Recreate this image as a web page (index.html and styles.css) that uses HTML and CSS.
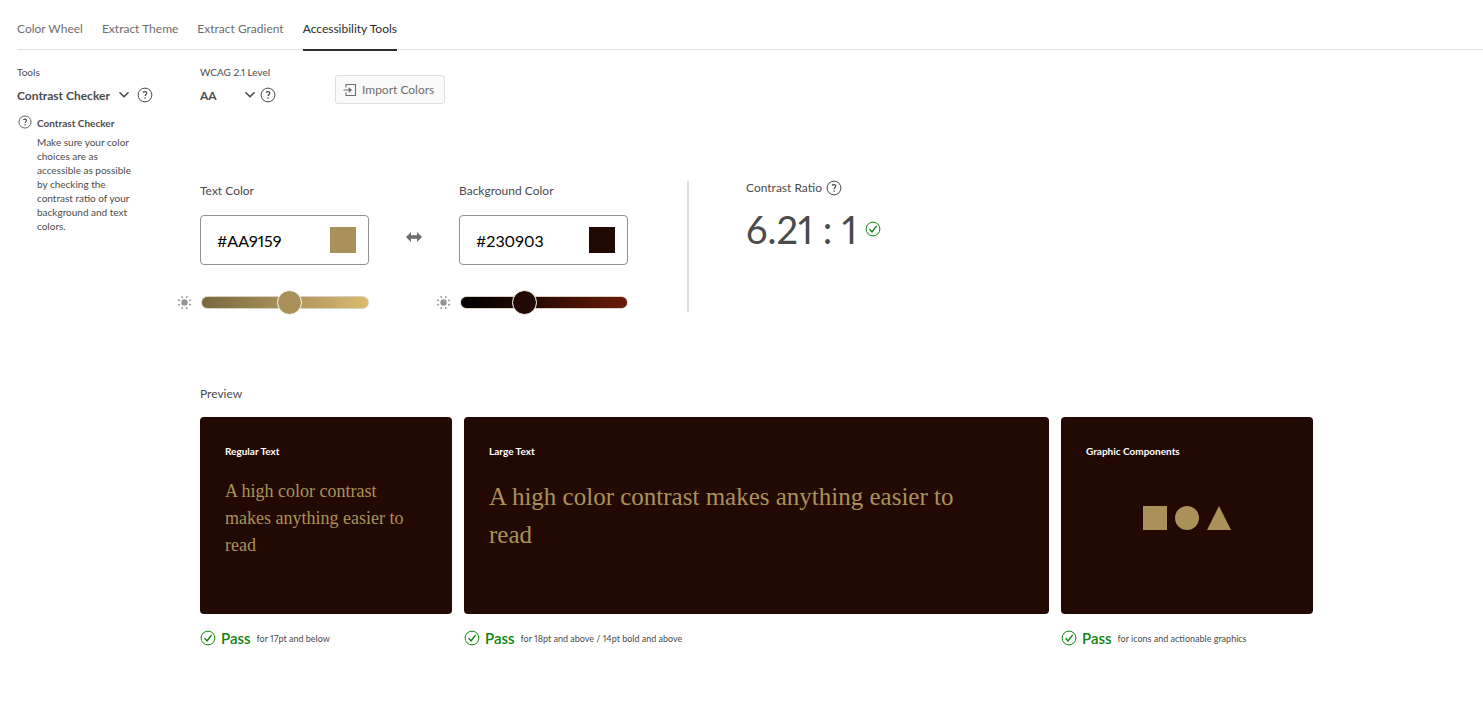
FILE: index.html
```html
<!DOCTYPE html>
<html lang="en">
<head>
<meta charset="utf-8">
<meta name="viewport" content="width=device-width, initial-scale=1">
<title>Accessibility Tools</title>
<link rel="stylesheet" href="styles.css">
</head>
<body>
<svg class="sprite" aria-hidden="true">
  <symbol id="help" viewBox="0 0 16 16">
    <circle cx="8" cy="8" r="6.9" fill="none" stroke="currentColor" stroke-width="1"/>
    <path d="M6 5.500C6.500 5 7 4.700 8 4.700c1.100 0 1.800.5 1.800 1.400 0 1.300-1.700 1.500-1.700 3" fill="none" stroke="currentColor" stroke-width="1.200"/>
    <circle cx="8.100" cy="11.100" r=".8" fill="currentColor"/>
  </symbol>
  <symbol id="pass" viewBox="0 0 16 16">
    <circle cx="8" cy="8" r="6.900" fill="none" stroke="currentColor" stroke-width="1"/>
    <path d="M4.600 8.300l2.400 2.600 4.700-6" fill="none" stroke="currentColor" stroke-width="1.500"/>
  </symbol>
  <symbol id="chevron" viewBox="0 0 10 6">
    <path d="M1 .8l4 4 4-4" fill="none" stroke="currentColor" stroke-width="1.600" stroke-linecap="round" stroke-linejoin="round"/>
  </symbol>
  <symbol id="sun" viewBox="0 0 16 16">
    <circle cx="8" cy="8" r="3.400" fill="currentColor"/>
    <g transform="rotate(22.500 8 8)"><path d="M8 .4v2.400M8 13.200v2.400M.4 8h2.400M13.200 8h2.400M2.600 2.600l1.700 1.700M11.700 11.700l1.700 1.700M2.600 13.400l1.700-1.700M11.700 4.300l1.700-1.700" stroke="currentColor" stroke-width="1.400"/></g>
  </symbol>
</svg>

<nav class="tabs">
  <a class="tab" href="#wheel">Color Wheel</a>
  <a class="tab" href="#theme">Extract Theme</a>
  <a class="tab" href="#gradient">Extract Gradient</a>
  <a class="tab tab-active" href="#tools" aria-current="page">Accessibility Tools</a>
</nav>

<div class="layout">
  <aside class="sidebar">
    <label class="small-label" for="tool">Tools</label>
    <div class="picker">
      <span class="select-wrap select-tool">
        <select id="tool"><option>Contrast Checker</option><option>Color Blind Safe</option></select>
        <svg class="chevron"><use href="#chevron"/></svg>
      </span>
      <button class="icon-button" aria-label="About tools"><svg class="icon"><use href="#help"/></svg></button>
    </div>
    <div class="hint">
      <svg class="hint-icon"><use href="#help"/></svg>
      <div>
        <h2 class="hint-title">Contrast Checker</h2>
        <p class="hint-text">Make sure your color choices are as accessible as possible by checking the contrast ratio of your background and text colors.</p>
      </div>
    </div>
  </aside>

  <main class="content">
    <div class="toolbar">
      <div class="level">
        <label class="small-label" for="level">WCAG 2.1 Level</label>
        <div class="picker">
          <span class="select-wrap select-level">
            <select id="level"><option>AA</option><option>AAA</option></select>
            <svg class="chevron"><use href="#chevron"/></svg>
          </span>
          <button class="icon-button" aria-label="About WCAG levels"><svg class="icon"><use href="#help"/></svg></button>
        </div>
      </div>
      <button class="import">
        <svg class="import-icon" viewBox="0 0 14 14"><path d="M3 4.500v-3h9.500v11H3v-3M.5 7h6" fill="none" stroke="currentColor" stroke-width="1.100"/><path d="M5.700 4.300L9 7 5.700 9.700z" fill="currentColor"/></svg>
        Import Colors
      </button>
    </div>

    <section class="colors">
      <div class="color">
        <label class="label" for="text-hex">Text Color</label>
        <div class="field">
          <input class="hex" id="text-hex" type="text" value="#AA9159">
          <button class="swatch swatch-text" aria-label="Pick text color"></button>
        </div>
        <div class="slider">
          <svg class="sun"><use href="#sun"/></svg>
          <input class="range range-text" type="range" min="0" max="100" value="53" aria-label="Text brightness">
        </div>
      </div>
      <button class="swap" aria-label="Swap colors">
        <svg viewBox="0 0 16 10"><path d="M0 5l5-5v3.200h6V0l5 5-5 5V6.800H5V10z" fill="currentColor"/></svg>
      </button>
      <div class="color">
        <label class="label" for="back-hex">Background Color</label>
        <div class="field">
          <input class="hex" id="back-hex" type="text" value="#230903">
          <button class="swatch swatch-back" aria-label="Pick background color"></button>
        </div>
        <div class="slider">
          <svg class="sun"><use href="#sun"/></svg>
          <input class="range range-back" type="range" min="0" max="100" value="36" aria-label="Background brightness">
        </div>
      </div>
      <div class="ratio">
        <div class="ratio-head">
          <span class="label">Contrast Ratio</span>
          <button class="icon-button" aria-label="About contrast ratio"><svg class="icon"><use href="#help"/></svg></button>
        </div>
        <div class="ratio-value">6.21 : 1 <svg class="icon pass"><use href="#pass"/></svg></div>
      </div>
    </section>

    <section class="preview">
      <h2 class="label">Preview</h2>
      <div class="cards">
        <article>
          <div class="card">
            <h3 class="card-title">Regular Text</h3>
            <p class="sample-regular">A high color contrast makes anything easier to read</p>
          </div>
          <div class="result"><svg class="icon pass"><use href="#pass"/></svg><span class="verdict">Pass</span><span class="scope">for 17pt and below</span></div>
        </article>
        <article>
          <div class="card">
            <h3 class="card-title">Large Text</h3>
            <p class="sample-large">A high color contrast makes anything easier to read</p>
          </div>
          <div class="result"><svg class="icon pass"><use href="#pass"/></svg><span class="verdict">Pass</span><span class="scope">for 18pt and above / 14pt bold and above</span></div>
        </article>
        <article>
          <div class="card">
            <h3 class="card-title">Graphic Components</h3>
            <div class="shapes">
              <svg viewBox="0 0 24 24"><path d="M0 0h24v24H0z" fill="currentColor"/></svg>
              <svg viewBox="0 0 24 24"><circle cx="12" cy="12" r="12" fill="currentColor"/></svg>
              <svg viewBox="0 0 24 24"><path d="M12 0l12 24H0z" fill="currentColor"/></svg>
            </div>
          </div>
          <div class="result"><svg class="icon pass"><use href="#pass"/></svg><span class="verdict">Pass</span><span class="scope">for icons and actionable graphics</span></div>
        </article>
      </div>
    </section>
  </main>
</div>
</body>
</html>
```

FILE: styles.css
```css
* { box-sizing: border-box; }

body {
  margin: 0;
  background: #fff;
  color: #4b4b4b;
  font-family: Lato, "Open Sans", sans-serif;
  font-size: 12px;
  font-variant-numeric: proportional-nums;
  line-height: 16px;
}

button, input, select { font: inherit; font-variant-numeric: inherit; color: inherit; }
button { padding: 0; border: 0; background: none; cursor: pointer; }
h2, h3, p { margin: 0; font-weight: 400; }
svg { display: block; flex: none; }

.sprite { position: absolute; width: 0; height: 0; }

.tabs {
  display: flex;
  gap: 19px;
  height: 50px;
  margin-left: 17px;
  border-bottom: 1px solid #e1e1e1;
}

.tab {
  height: 51px;
  padding-top: 21px;
  color: #6e6e6e;
  text-decoration: none;
}

.tab-active {
  border-bottom: 2px solid #2c2c2c;
  color: #2c2c2c;
}

.layout {
  display: grid;
  grid-template-columns: 183px minmax(0, 1fr);
  padding: 14px 170px 0 17px;
}

.small-label {
  display: block;
  font-size: 10px;
}

.picker {
  display: flex;
  align-items: center;
  height: 30px;
}

.select-wrap {
  display: flex;
  align-items: center;
  position: relative;
}

.select-tool { width: 112px; margin-right: 8px; }
.select-level { width: 55px; margin-right: 5px; }

.select-wrap select {
  width: 100%;
  padding: 1px 0 0;
  border: 0;
  background: none;
  font-weight: 700;
  appearance: none;
}

.chevron {
  position: absolute;
  right: 0;
  width: 10px;
  height: 6px;
  pointer-events: none;
}

.icon, .icon-button { width: 16px; height: 16px; }

.hint {
  display: flex;
  gap: 5px;
  margin-top: 5px;
}

.hint-icon { width: 14px; height: 14px; margin-left: 1px; }

.hint-title {
  font-size: 10px;
  font-weight: 700;
}

.hint-text {
  width: 100px;
  margin-top: 4px;
  font-size: 10px;
  line-height: 14px;
}

.toolbar {
  display: flex;
  align-items: flex-start;
}

.level { width: 135px; }

.import {
  display: flex;
  align-items: center;
  gap: 5px;
  height: 29px;
  margin-top: 11px;
  padding: 0 10px 0 7px;
  border: 1px solid #e1e1e1;
  border-radius: 3px;
  background: #fafafa;
  color: #6e6e6e;
}

.import-icon { width: 14px; height: 14px; }

.colors {
  display: flex;
  height: 131px;
  margin-top: 71px;
}

.color { width: 169px; padding-top: 2px; }

.label {
  font-size: 12px;
  line-height: 16px;
}

.color .label { display: block; }

.field {
  display: flex;
  align-items: center;
  height: 50px;
  margin-top: 16px;
  padding: 0 12px 0 16px;
  border: 1px solid #909090;
  border-radius: 4px;
}

.hex {
  flex: 1;
  min-width: 0;
  padding: 0;
  border: 0;
  background: none;
  color: #000;
  font-size: 16px;
}

.swatch { width: 26px; height: 26px; }
.swatch-text { background: #aa9159; }
.swatch-back { background: #230903; }

.slider {
  display: flex;
  align-items: center;
  gap: 9px;
  height: 24px;
  margin: 25px 0 0 -23px;
}

.sun { width: 15px; height: 15px; color: #959595; }

.range {
  flex: 1;
  min-width: 0;
  height: 24px;
  margin: 0;
  background: none;
  appearance: none;
}

.range::-webkit-slider-runnable-track {
  height: 13px;
  border: 1px solid #d8d2c4;
  border-radius: 7px;
}

.range::-webkit-slider-thumb {
  width: 25px;
  height: 25px;
  margin-top: -7px;
  border: 1px solid #fff;
  border-radius: 50%;
  appearance: none;
}

.range-text::-webkit-slider-runnable-track { background: linear-gradient(90deg, #776840, #aa9159 50%, #dabb70); }
.range-text::-webkit-slider-thumb { background: #aa9159; }
.range-back::-webkit-slider-runnable-track { background: linear-gradient(90deg, #000, #230903 40%, #6a1b08); }
.range-back::-webkit-slider-thumb { background: #230903; }

.swap {
  width: 16px;
  height: 10px;
  margin: 51px 37px 0;
  color: #6e6e6e;
}

.ratio {
  margin-left: 59px;
  padding-left: 57px;
  border-left: 2px solid #e1e1e1;
}

.ratio-head {
  display: flex;
  align-items: center;
  gap: 4px;
  height: 14px;
}

.ratio-value {
  display: flex;
  align-items: center;
  gap: 8px;
  margin-top: 10px;
  font-size: 38px;
  line-height: 48px;
}

.pass { color: #0d840d; }

.preview { margin-top: 74px; }

.cards {
  display: grid;
  grid-template-columns: 252px minmax(0, 1fr) 252px;
  gap: 12px;
  margin-top: 15px;
}

.card {
  height: 197px;
  padding: 26px 25px;
  border-radius: 4px;
  background: #230903;
  color: #aa9159;
}

.card-title {
  color: #fff;
  font-size: 10px;
  font-weight: 700;
  line-height: 16px;
}

.sample-regular, .sample-large {
  margin-top: 19px;
  padding-right: 20px;
  font-family: "Liberation Serif", serif;
}

.sample-regular {
  font-size: 18px;
  line-height: 27px;
}

.sample-large {
  padding-right: 40px;
  font-size: 25px;
  line-height: 38px;
}

.shapes {
  display: flex;
  justify-content: center;
  gap: 8px;
  margin-top: 47px;
}

.shapes svg { width: 24px; height: 24px; }

.result {
  display: flex;
  align-items: center;
  height: 20px;
  margin-top: 14px;
}

.verdict {
  margin: 0 6px 0 5px;
  color: #0d840d;
  font-size: 15px;
  font-weight: 600;
}

.scope { padding-top: 2px; font-size: 9px; }
```
